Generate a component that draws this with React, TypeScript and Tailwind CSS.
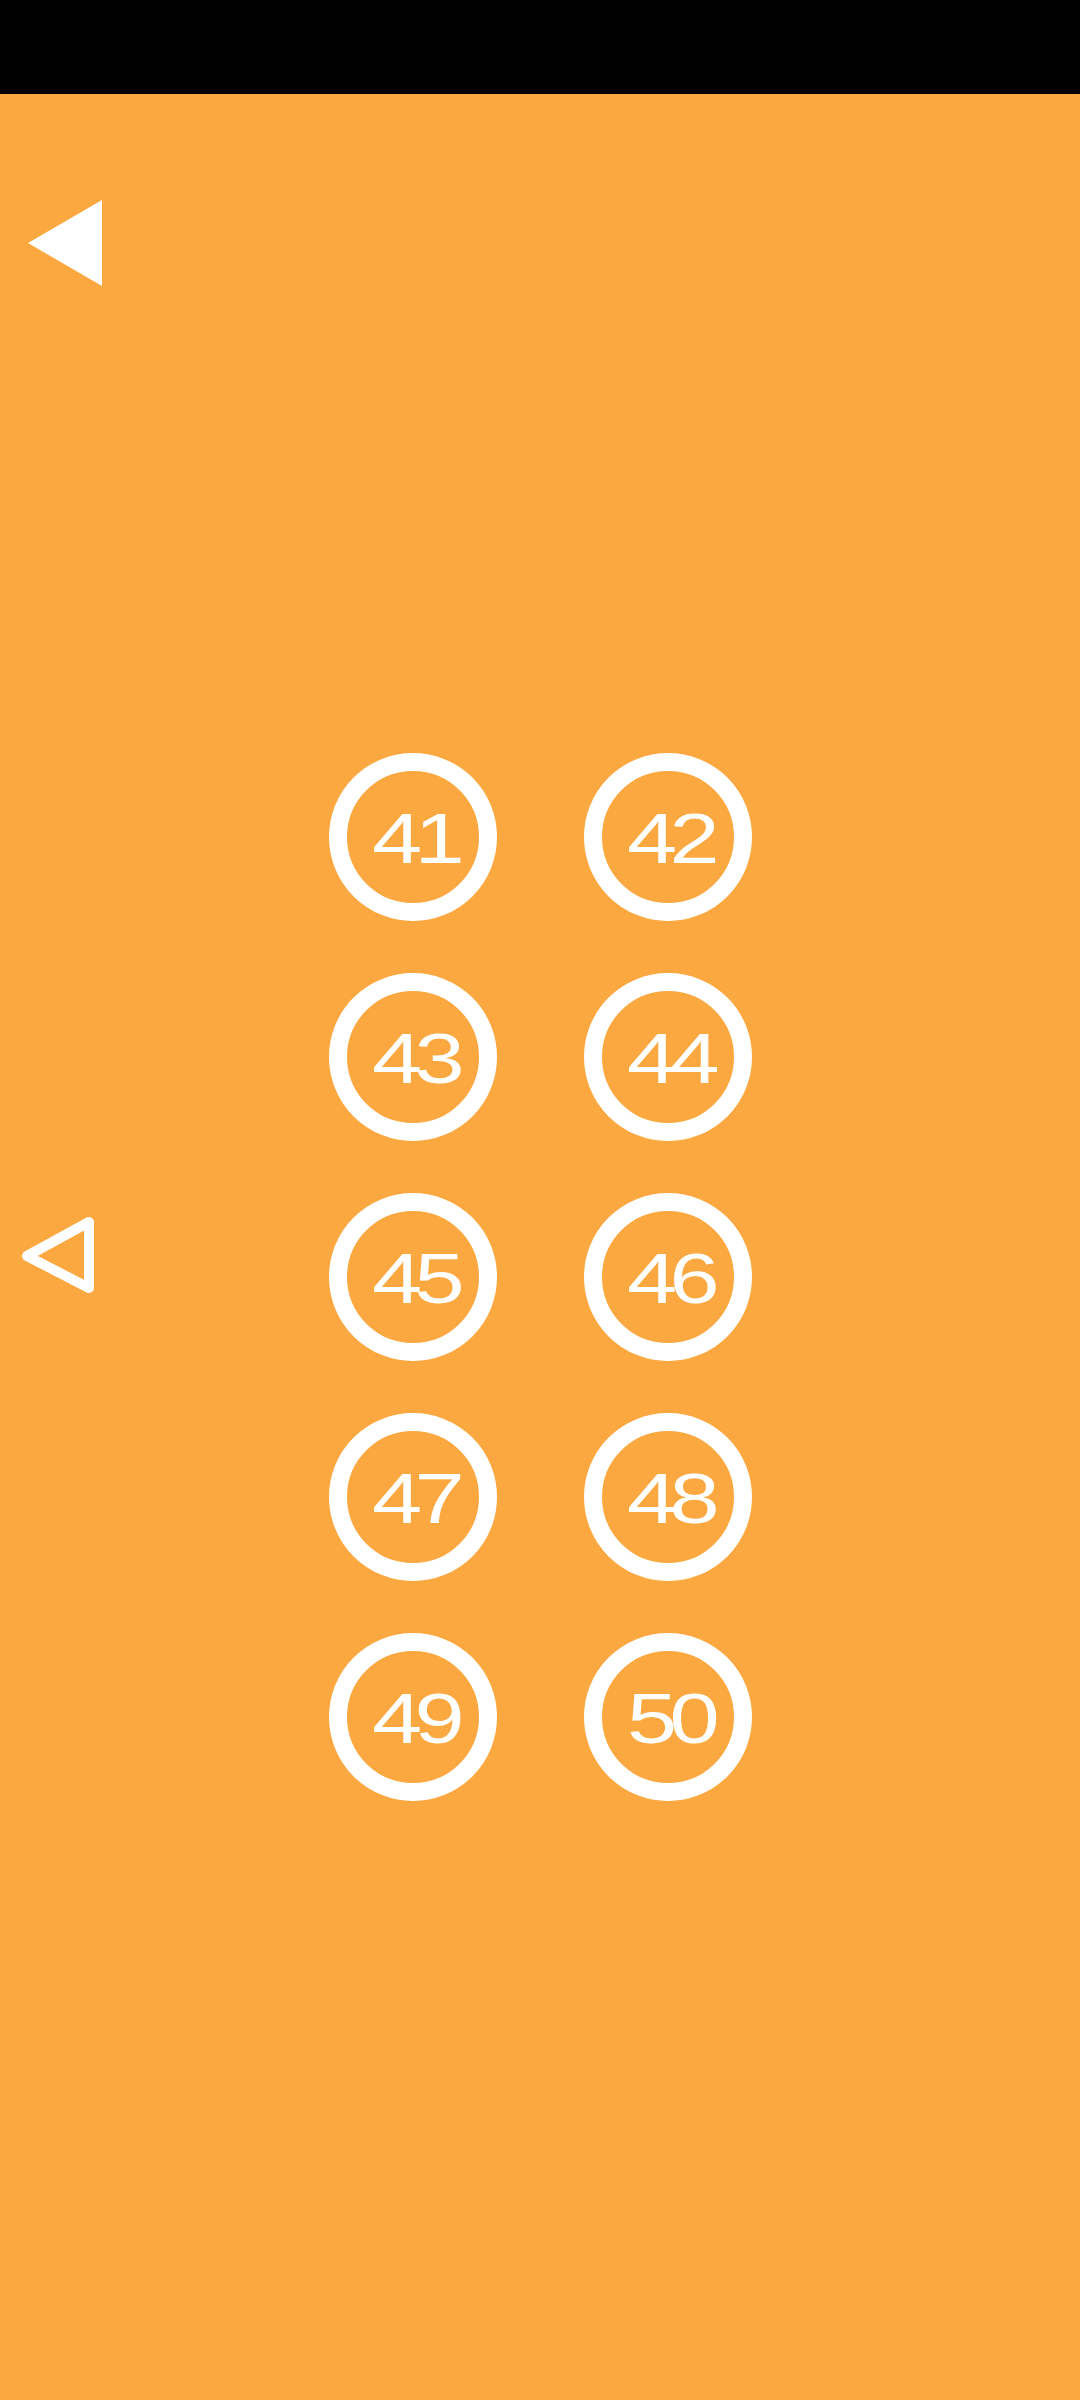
import React from 'react';

const levels = [41, 42, 43, 44, 45, 46, 47, 48, 49, 50];

function LevelButton({ n }: { n: number }) {
  return (
    <button className="w-[168px] h-[168px] rounded-full border-[18px] border-white flex items-center justify-center">
      <span
        className="text-white text-[71px] leading-none tracking-[-6px] scale-x-[1.27] translate-x-[2px] translate-y-[1px]"
        style={{ fontFamily: '"Liberation Sans", Arial, sans-serif' }}
      >
        {n}
      </span>
    </button>
  );
}

export default function App() {
  return (
    <div className="w-[1080px] h-[2400px] flex flex-col bg-[#fca841]">
      <div className="h-[94px] bg-black shrink-0" />
      <div className="relative flex-1 flex flex-col">
        <div className="pl-[28px] pt-[106px]">
          <svg width="74" height="86" viewBox="0 0 74 86">
            <polygon points="0,43 74,0 74,86" fill="white" />
          </svg>
        </div>

        <div className="mt-[467px] mx-auto grid grid-cols-2 gap-x-[87px] gap-y-[52px]">
          {levels.map((n) => (
            <LevelButton key={n} n={n} />
          ))}
        </div>

        {/* side arrow */}
        <div className="absolute left-[19px] top-[1122px]">
          <svg width="76" height="78" viewBox="0 0 76 78">
            <path
              d="M70 6 L70 72 L8 40 Z"
              fill="none"
              stroke="white"
              strokeWidth="10"
              strokeLinejoin="round"
            />
          </svg>
        </div>
      </div>
    </div>
  );
}
